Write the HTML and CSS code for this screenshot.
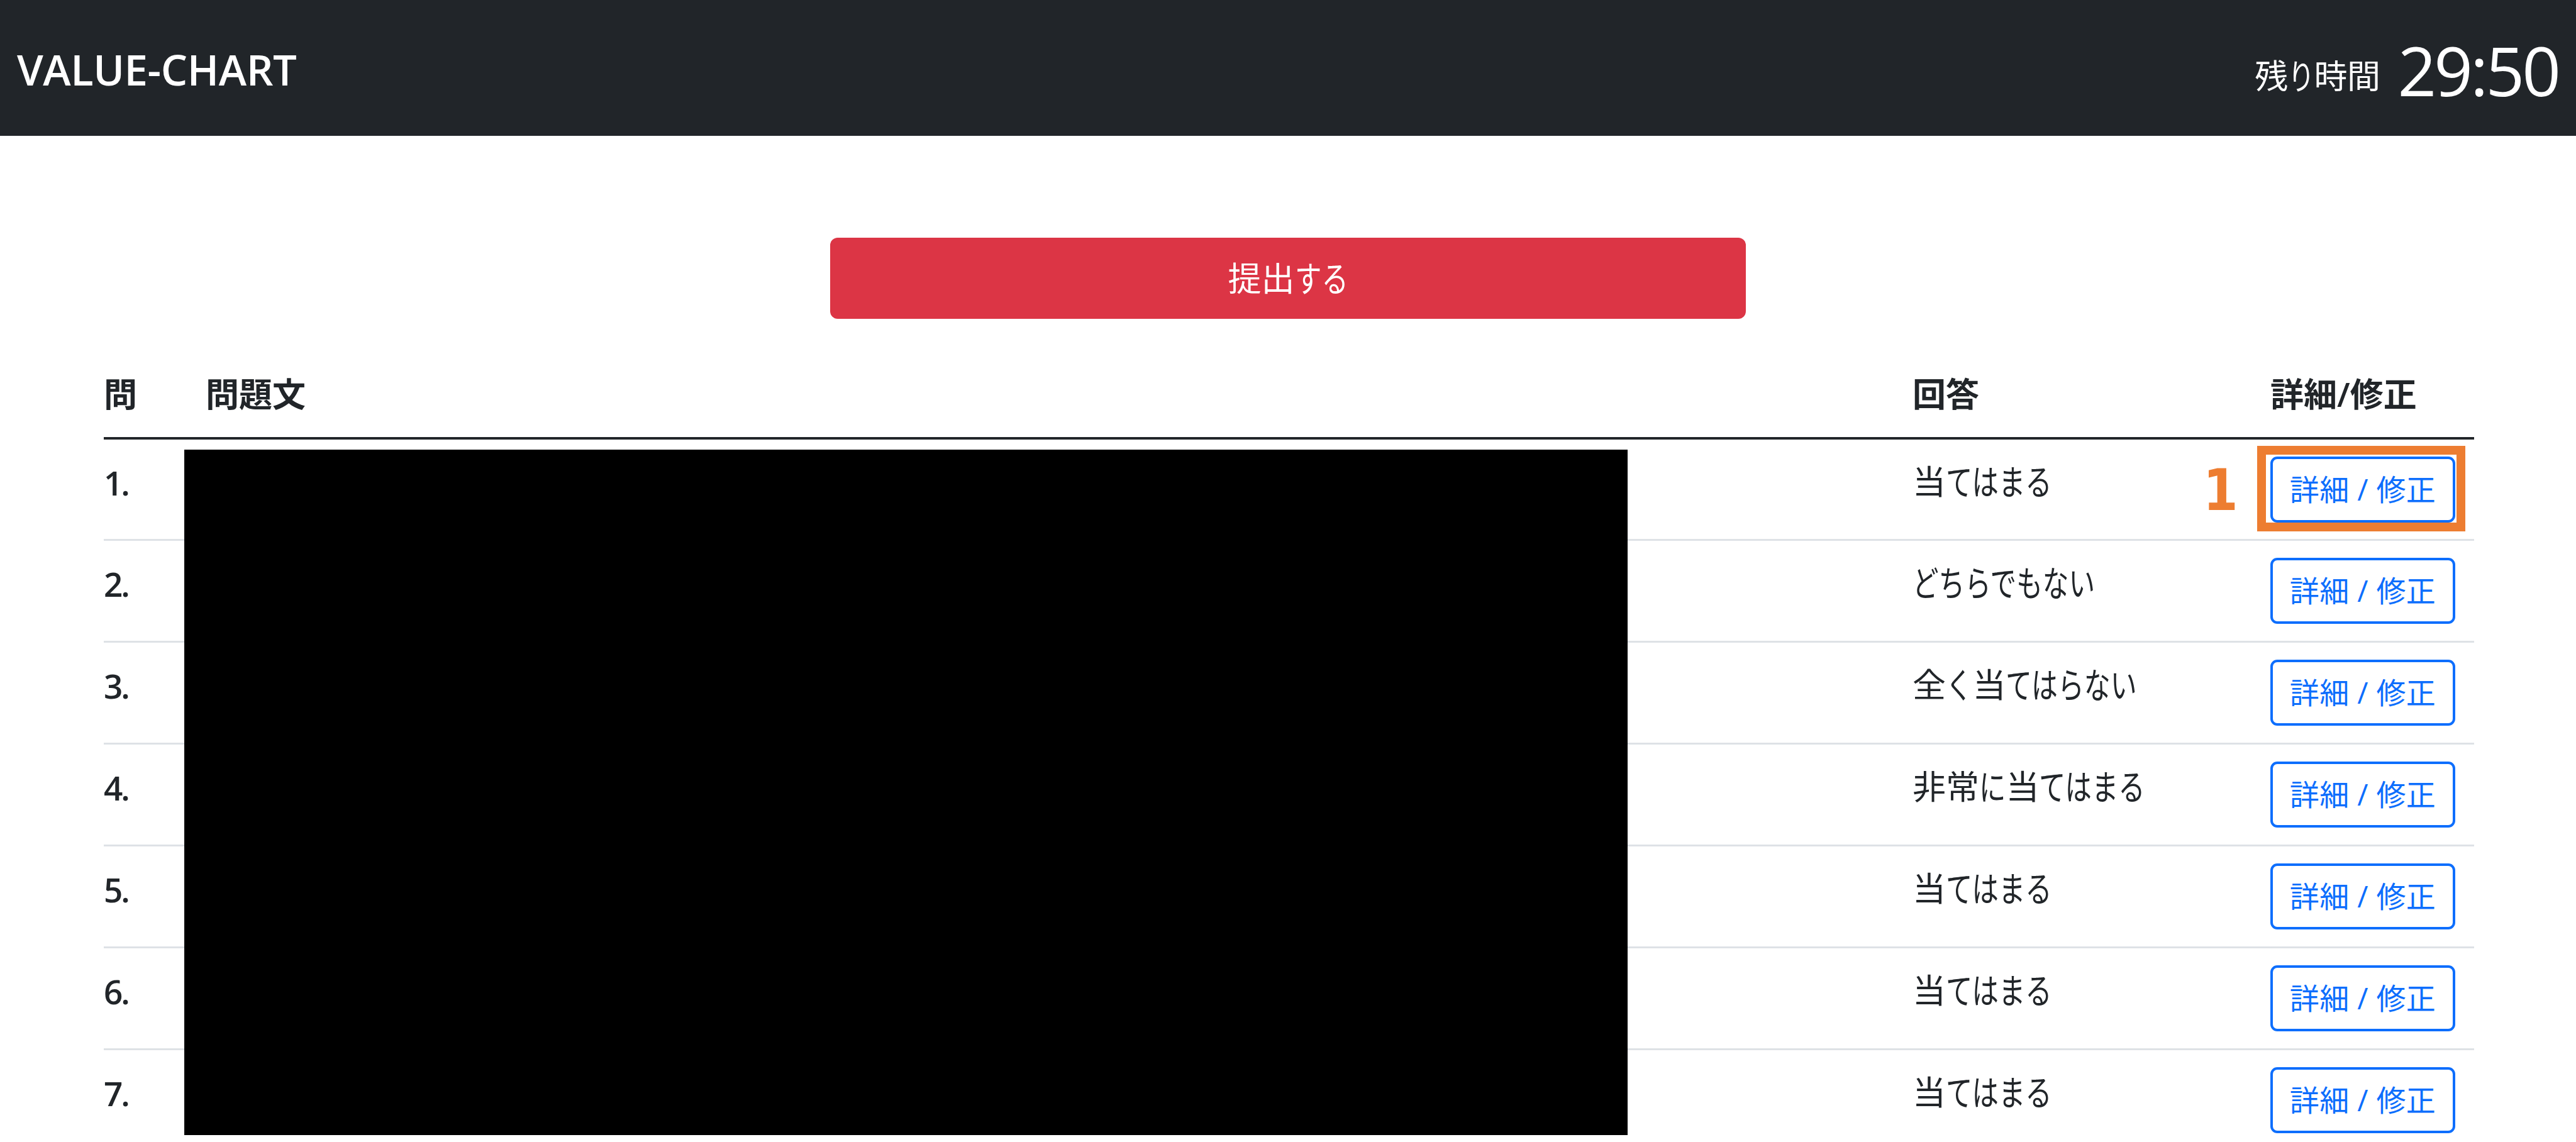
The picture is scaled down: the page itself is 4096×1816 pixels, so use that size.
FILE: index.html
```
<!DOCTYPE html>
<html lang="ja">

<head>
  <meta charset="UTF-8">
  <meta name="viewport" content="width=device-width, initial-scale=1.0">
  <title>VALUE-CHART</title>
  <link rel="stylesheet" href="styles.css">
</head>

<body>
  <header class="navbar">
    <div class="brand">VALUE-CHART</div>
    <div class="timer">
      <span class="timer-label">残<span class="kana k1">り</span>時間</span>
      <span class="timer-value">29:50</span>
    </div>
  </header>

  <main class="container">
    <button type="button" class="btn-submit">提出<span class="kana k2">する</span></button>

    <div class="answers">
      <table class="table">
        <colgroup>
          <col class="col-no">
          <col class="col-question">
          <col class="col-answer">
          <col class="col-action">
        </colgroup>
        <thead>
          <tr>
            <th>問</th>
            <th>問題文</th>
            <th>回答</th>
            <th>詳細/修正</th>
          </tr>
        </thead>
        <tbody>
          <tr>
            <th>1.</th>
            <td></td>
            <td>当<span class="kana k4">てはまる</span></td>
            <td>
              <div class="action">
                <button type="button" class="btn-detail">詳細 / 修正</button>
                <div class="marker"></div>
                <div class="marker-no">1</div>
              </div>
            </td>
          </tr>
          <tr>
            <th>2.</th>
            <td></td>
            <td><span class="kana k7">どちらでもない</span></td>
            <td><button type="button" class="btn-detail">詳細 / 修正</button></td>
          </tr>
          <tr>
            <th>3.</th>
            <td></td>
            <td>全<span class="kana k1">く</span>当<span class="kana k5">てはらない</span></td>
            <td><button type="button" class="btn-detail">詳細 / 修正</button></td>
          </tr>
          <tr>
            <th>4.</th>
            <td></td>
            <td>非常<span class="kana k1">に</span>当<span class="kana k4">てはまる</span></td>
            <td><button type="button" class="btn-detail">詳細 / 修正</button></td>
          </tr>
          <tr>
            <th>5.</th>
            <td></td>
            <td>当<span class="kana k4">てはまる</span></td>
            <td><button type="button" class="btn-detail">詳細 / 修正</button></td>
          </tr>
          <tr>
            <th>6.</th>
            <td></td>
            <td>当<span class="kana k4">てはまる</span></td>
            <td><button type="button" class="btn-detail">詳細 / 修正</button></td>
          </tr>
          <tr>
            <th>7.</th>
            <td></td>
            <td>当<span class="kana k4">てはまる</span></td>
            <td><button type="button" class="btn-detail">詳細 / 修正</button></td>
          </tr>
        </tbody>
      </table>
      <div class="mask"></div>
    </div>
  </main>
</body>

</html>
```

FILE: styles.css
```
* {
  box-sizing: border-box;
}

body {
  margin: 0;
  height: 1816px;
  overflow: hidden;
  background-color: #ffffff;
  color: #212529;
  font-family: "Open Sans", "Noto Sans CJK JP", sans-serif;
  font-size: 53px;
  line-height: 80px;
}

.navbar {
  display: flex;
  justify-content: space-between;
  height: 216px;
  padding: 0 28px 0 27px;
  background-color: #212529;
  color: #ffffff;
}

.brand {
  padding-top: 70px;
  font-size: 67px;
  font-weight: 600;
  letter-spacing: -0.4px;
}

.timer {
  display: flex;
  align-items: flex-start;
  gap: 28px;
}

.timer-label {
  padding-top: 81px;
  letter-spacing: -0.5px;
}

.timer-value {
  padding-top: 32px;
  font-size: 108px;
  line-height: 160px;
  letter-spacing: -4px;
}

/* narrow kana, like a UI gothic */
.kana {
  display: inline-block;
  transform: scale(0.8, 1.06);
  transform-origin: left center;
}

.k1 {
  margin-right: -0.2em;
}

.k2 {
  margin-right: -0.4em;
}

.k4 {
  margin-right: -0.8em;
}

.k5 {
  margin-right: -1em;
  transform: scale(0.79, 1.06);
}

.k7 {
  margin-right: -1.4em;
  transform: scale(0.785, 1.06);
}

.container {
  width: 3769px;
  margin-left: 165px;
  padding-top: 162px;
}

button {
  display: block;
  padding: 0;
  font-family: inherit;
  cursor: pointer;
}

.btn-submit {
  width: 1456px;
  height: 129px;
  margin-left: 1155px;
  border: none;
  border-radius: 12px;
  background-color: #dc3545;
  color: #ffffff;
  font-size: 53px;
  line-height: 129px;
}

.answers {
  position: relative;
  margin-top: 30px;
}

.table {
  width: 100%;
  table-layout: fixed;
  border-collapse: separate;
  border-spacing: 0;
}

.col-no {
  width: 162px;
}

.col-question {
  width: 2714px;
}

.col-answer {
  width: 569px;
}

.col-action {
  width: 324px;
}

th,
td {
  padding: 27px 0;
  border-bottom: 3px solid #dee2e6;
  text-align: left;
  vertical-align: top;
  font-weight: 400;
  white-space: nowrap;
}

th {
  font-weight: 600;
}

thead th {
  padding: 50px 0 28px;
  border-bottom: 4px solid #212529;
}

tbody th {
  padding-top: 29px;
  letter-spacing: -3px;
}

tbody tr:first-child th,
tbody tr:first-child td {
  padding-bottom: 26px;
}

.action {
  position: relative;
}

.btn-detail {
  width: 294px;
  height: 105px;
  border: 4px solid #0d6efd;
  border-radius: 11px;
  background-color: #ffffff;
  color: #0d6efd;
  font-size: 47px;
  line-height: 97px;
  letter-spacing: 0.4px;
}

.marker {
  position: absolute;
  top: -17px;
  left: -21px;
  width: 331px;
  height: 136px;
  border: 14px solid #ed7d31;
}

.marker-no {
  position: absolute;
  top: 1px;
  left: -107px;
  color: #ed7d31;
  font-family: "DejaVu Sans", sans-serif;
  font-size: 91px;
  font-weight: 700;
  line-height: 105px;
  transform: scaleX(0.88);
  transform-origin: left center;
}

/* question text is blacked out */
.mask {
  position: absolute;
  top: 178px;
  left: 128px;
  width: 2295px;
  height: 1090px;
  background-color: #000000;
}
```
